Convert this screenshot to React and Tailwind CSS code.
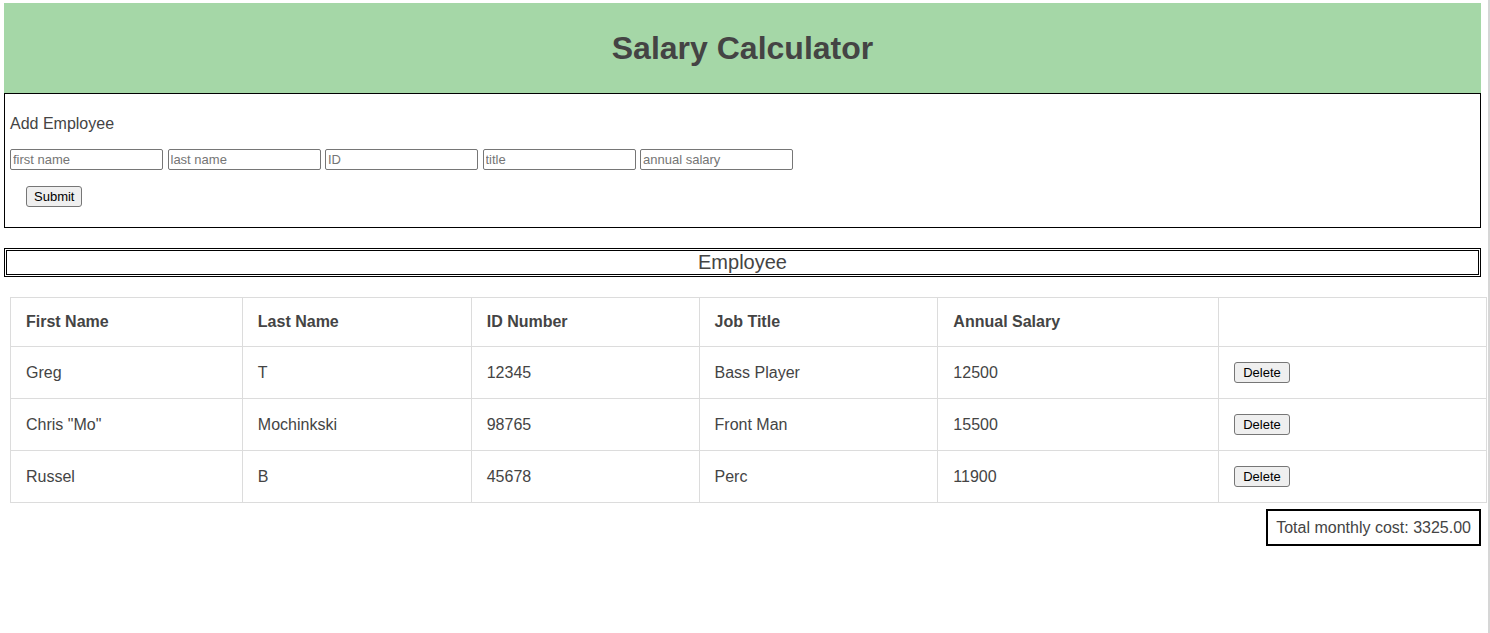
import React from "react";

const employees = [
  { first: "Greg", last: "T", id: "12345", title: "Bass Player", salary: "12500" },
  { first: 'Chris "Mo"', last: "Mochinkski", id: "98765", title: "Front Man", salary: "15500" },
  { first: "Russel", last: "B", id: "45678", title: "Perc", salary: "11900" },
];

const cols = ["w-[232px]", "w-[229px]", "w-[228px]", "w-[239px]", "w-[281px]", "w-[268px]"];
const headers = ["First Name", "Last Name", "ID Number", "Job Title", "Annual Salary", ""];

const placeholders = ["first name", "last name", "ID", "title", "annual salary"];

const btn =
  "h-[21px] px-[7px] text-[13px] leading-none text-black bg-[#efefef] border border-[#767676] rounded-[3px]";

export default function App() {
  return (
    <div
      className="h-[633px] w-full border-r-2 border-[#d6d6d6] text-[#444] pt-[3px]"
      style={{ fontFamily: '"Liberation Sans", Arial, sans-serif' }}
    >
      {/* header */}
      <div className="ml-[4px] w-[1477px] h-[90px] bg-[#a5d7a7] flex items-center justify-center">
        <h1 className="text-[32px] font-bold text-[#444]">Salary Calculator</h1>
      </div>

      {/* add employee form */}
      <div className="ml-[4px] w-[1477px] h-[135px] border border-black px-[5px] pt-[20px]">
        <p className="text-[16px] leading-[20px]">Add Employee</p>
        <div className="flex gap-[4.5px] mt-[15px]">
          {placeholders.map((p) => (
            <input
              key={p}
              placeholder={p}
              className="w-[153px] h-[21px] border border-[#767676] rounded-[2px] px-[2px] text-[13px] placeholder:text-[#757575] outline-none"
            />
          ))}
        </div>
        <div className="mt-[14px] pl-[16px]">
          <button className={btn}>Submit</button>
        </div>
      </div>

      {/* employee title */}
      <div className="ml-[4px] mt-[20px] w-[1477px] h-[29px] border-[3px] border-double border-black flex items-center justify-center">
        <h2 className="text-[20px] leading-none text-[#444] -mt-[1px]">Employee</h2>
      </div>

      {/* table */}
      <table className="ml-[10px] mt-[20px] w-[1477px] border-collapse text-[16px]">
        <thead>
          <tr className="h-[49px]">
            {headers.map((h, i) => (
              <th
                key={i}
                className={`${cols[i]} border border-[#dcdcdc] text-left font-bold pl-[15px]`}
              >
                {h}
              </th>
            ))}
          </tr>
        </thead>
        <tbody>
          {employees.map((e) => (
            <tr key={e.id} className="h-[52px]">
              <td className="border border-[#dcdcdc] pl-[15px]">{e.first}</td>
              <td className="border border-[#dcdcdc] pl-[15px]">{e.last}</td>
              <td className="border border-[#dcdcdc] pl-[15px]">{e.id}</td>
              <td className="border border-[#dcdcdc] pl-[15px]">{e.title}</td>
              <td className="border border-[#dcdcdc] pl-[15px]">{e.salary}</td>
              <td className="border border-[#dcdcdc] pl-[15px]">
                <button className={`${btn} block h-[20px] px-[8px]`}>Delete</button>
              </td>
            </tr>
          ))}
        </tbody>
      </table>

      {/* total */}
      <div className="w-[1481px] flex justify-end mt-[6px]">
        <div className="h-[37px] border-2 border-black px-[8px] flex items-center text-[16px]">
          Total monthly cost: 3325.00
        </div>
      </div>
    </div>
  );
}
